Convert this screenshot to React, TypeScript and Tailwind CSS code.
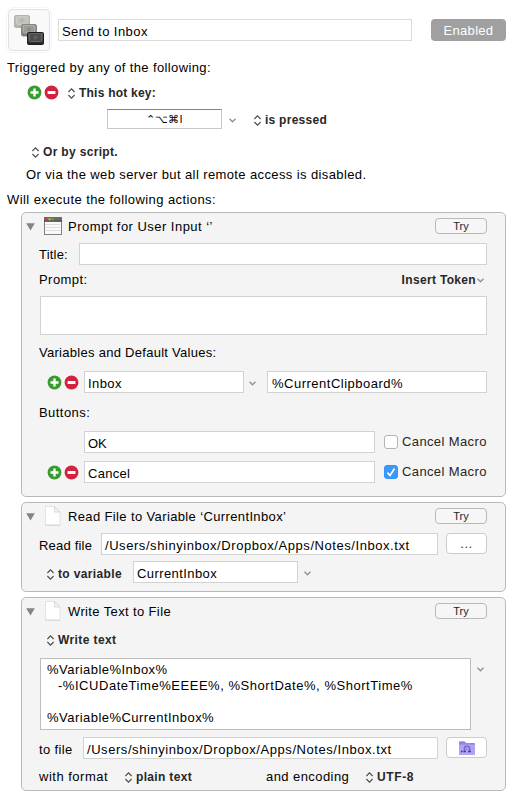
import type { ReactNode } from "react";
import { clsx } from "clsx";

const Plus = () => (
  <svg className="h-[15px] w-[15px] shrink-0" viewBox="0 0 15 15">
    <circle cx="7.5" cy="7.5" r="6.9" fill="#389b30" />
    <path d="M7.5 3.5v8M3.5 7.5h8" stroke="#fff" strokeWidth="2.4" />
  </svg>
);

const Minus = () => (
  <svg className="h-[15px] w-[15px] shrink-0" viewBox="0 0 15 15">
    <circle cx="7.5" cy="7.5" r="6.9" fill="#d1233f" />
    <rect x="3.6" y="6" width="7.8" height="3" fill="#fff" />
  </svg>
);

const PlusMinus = () => (
  <div className="flex shrink-0 gap-[2px]">
    <Plus />
    <Minus />
  </div>
);

const UpDown = ({ className }: { className?: string }) => (
  <svg className={clsx("h-[11px] w-[7px] shrink-0", className)} viewBox="0 0 7 11" fill="none" stroke="#4a4a4a" strokeWidth="1.1">
    <path d="M0.4 4 3.5 0.8 6.6 4M0.4 7 3.5 10.2 6.6 7" />
  </svg>
);

const Chevron = ({ className }: { className?: string }) => (
  <svg className={clsx("h-[5px] w-[7px] shrink-0", className)} viewBox="0 0 7 5" fill="none" stroke="#929292" strokeWidth="1.4">
    <path d="M0.5 0.7 3.5 3.7 6.5 0.7" />
  </svg>
);

const Bold = ({ children, className }: { children: ReactNode; className?: string }) => (
  <div className={clsx("text-[12px] leading-4 font-bold whitespace-nowrap text-[#272727]", className)}>{children}</div>
);

const Label = ({ children, className }: { children: ReactNode; className?: string }) => (
  <div className={clsx("leading-4 whitespace-nowrap", className)}>{children}</div>
);

const Field = ({ children, className }: { children?: ReactNode; className?: string }) => (
  <div className={clsx("h-[22px] shrink-0 border border-[#d2d2d2] bg-white pt-[4px] pl-[3px] leading-4 whitespace-nowrap", className)}>{children}</div>
);

const Checkbox = ({ checked }: { checked?: boolean }) => (
  <div className="mt-[3px] ml-[9px] flex h-4">
    <div className={clsx("mt-px h-[14px] w-[14px] rounded-[3px] border", checked ? "border-[#3594fa] bg-[#3b99fc]" : "border-[#b4b4b4] bg-white")}>
      {checked && (
        <svg viewBox="0 0 12 12" className="h-3 w-3" fill="none" stroke="#fff" strokeWidth="1.7">
          <path d="M2.4 6.6 5 9.4 9.5 2.5" />
        </svg>
      )}
    </div>
    <span className="ml-1 leading-4 tracking-[0.38px] text-[#262626]">Cancel Macro</span>
  </div>
);

const WindowIcon = () => (
  <svg className="ml-[9px] h-[18px] w-[18px]" viewBox="0 0 18 18">
    <rect x="0.5" y="0.5" width="17" height="17" fill="#fafafa" stroke="#808080" />
    <rect x="0" y="0" width="18" height="4.6" fill="#6b6b6b" />
    <rect x="0" y="3.6" width="18" height="1" fill="#3f3f3f" />
    <circle cx="2.6" cy="2.3" r="1.2" fill="#e4373c" />
    <circle cx="5.6" cy="2.3" r="1.2" fill="#dba526" />
    <circle cx="8.6" cy="2.3" r="1.2" fill="#55ad35" />
    <path d="M1.5 7.5h15M1.5 10.5h15M1.5 13.5h15" stroke="#dedede" />
  </svg>
);

const PageIcon = () => (
  <svg className="-mt-px ml-[10px] h-[20px] w-[16px]" viewBox="0 0 16 20">
    <path d="M0.5 0.5H9.5L15 6V19.2H0.5Z" fill="#fff" stroke="#e2e2e2" />
    <path d="M0.5 19.2H15" stroke="#d2d2d2" />
    <path d="M9.5 0.5V6H15Z" fill="#f4f4f4" stroke="#d0d0d0" strokeWidth="0.8" />
  </svg>
);

const Panel = ({ title, icon, height, tracking, children }: { title: string; icon: ReactNode; height: string; tracking: string; children: ReactNode }) => (
  <section className={clsx("ml-[21px] w-[485px] rounded-[5px] border border-[#b9b9b9] bg-[#f4f4f4]", height)}>
    <header className="flex h-[30px] items-start pt-1 pl-1">
      <svg className="mt-[6px] h-2 w-[9px]" viewBox="0 0 9 8">
        <path d="M0.2 0.3H8.8L4.5 7.6Z" fill="#848484" />
      </svg>
      <div className="w-[33px]">{icon}</div>
      <h2 className={clsx("mt-[2px] leading-4 whitespace-nowrap", tracking)}>{title}</h2>
      <button className="mt-[1px] mr-[18px] ml-auto h-4 w-[52px] rounded-[4px] border border-[#b9b9b9] bg-[#f6f6f6] text-[11px] leading-[14px] text-[#262626]">
        Try
      </button>
    </header>
    {children}
  </section>
);

const path = "/Users/shinyinbox/Dropbox/Apps/Notes/Inbox.txt";

export default function App() {
  return (
    <main className="h-[798px] w-[513px] overflow-hidden bg-white font-['Liberation_Sans',Arial,sans-serif] text-[13px] text-black">
      <div className="flex h-[60px] items-start">
        <div className="mt-[7px] ml-[6px] h-[46px] w-[46px] rounded-[7px] border border-[#f3f6f5] p-px">
          <svg className="h-[42px] w-[42px]" viewBox="0 0 42 42">
            <defs>
              <linearGradient id="light" x2="0" y2="1">
                <stop stopColor="#c2c2bd" />
                <stop offset="1" stopColor="#b1b1ac" />
              </linearGradient>
              <linearGradient id="mid" x2="0" y2="1">
                <stop stopColor="#a5a5a0" />
                <stop offset="1" stopColor="#777772" />
              </linearGradient>
              <linearGradient id="dark" x2="0" y2="1">
                <stop stopColor="#555" />
                <stop offset="0.75" stopColor="#3c3c3c" />
                <stop offset="1" stopColor="#181818" />
              </linearGradient>
            </defs>
            <rect x="0.5" y="0.5" width="41" height="41" rx="4" fill="#f9f9f9" stroke="#dfe1e0" />
            <rect x="6.5" y="6.5" width="15" height="12" rx="1.5" fill="url(#light)" stroke="#b3b3ae" />
            <rect x="8.5" y="7.5" width="11" height="8" rx="1" fill="#c3c3be" stroke="#cecec9" />
            <circle cx="14" cy="11.5" r="1.3" fill="none" stroke="#b0b0aa" />
            <rect x="13.5" y="15.5" width="15" height="11.5" rx="1.5" fill="url(#mid)" stroke="#85857f" />
            <rect x="15.5" y="16.5" width="11" height="7.5" rx="1" fill="#9c9c96" stroke="#afafa9" />
            <circle cx="21" cy="20.5" r="1.3" fill="none" stroke="#82827c" />
            <rect x="19.5" y="23.5" width="16" height="12" rx="1" fill="url(#dark)" stroke="#1d1d1d" />
            <rect x="21.5" y="24.5" width="12" height="8" rx="1" fill="#4c4c4c" stroke="#666" />
            <circle cx="27.5" cy="28.5" r="1.3" fill="none" stroke="#777" />
          </svg>
        </div>
        <Field className="mt-[19px] ml-[6px] w-[354px] border-[#d9dcdb] tracking-[0.43px]">Send to Inbox</Field>
        <button className="mt-[19px] ml-[19px] h-[22px] w-[75px] rounded-[4px] bg-[#a0a0a0] text-[13px] leading-[23px] tracking-[0.3px] text-white">Enabled</button>
      </div>

      <Label className="h-[25px] pl-[7px] tracking-[0.38px]">Triggered by any of the following:</Label>
      <div className="flex h-[24px] items-start pl-[27px]">
        <PlusMinus />
        <UpDown className="mt-[3px] ml-[9px]" />
        <Bold className="ml-1 tracking-[0.23px]">This hot key:</Bold>
      </div>
      <div className="flex h-[35px] items-start pl-[107px]">
        <div className="h-5 w-[115px] border border-[#c8c8c8] border-t-[#858585] bg-white text-center text-[11px] leading-[18px]">⌃⌥⌘I</div>
        <Chevron className="mt-[9px] ml-[7px]" />
        <UpDown className="mt-[6px] ml-[18px]" />
        <Bold className="mt-[3px] ml-1 tracking-[0.26px]">is pressed</Bold>
      </div>
      <div className="flex h-[23px] items-start pl-[32px]">
        <UpDown className="mt-[3px]" />
        <Bold className="ml-1 tracking-[0.33px]">Or by script.</Bold>
      </div>
      <Label className="h-[25px] pl-[26px] tracking-[0.39px]">Or via the web server but all remote access is disabled.</Label>
      <Label className="h-[20px] pl-[7px] tracking-[0.42px]">Will execute the following actions:</Label>

      <Panel title="Prompt for User Input ‘’" icon={<WindowIcon />} height="h-[285px]" tracking="tracking-[0.47px]">
        <div className="flex h-[29px] items-start pl-[17px]">
          <Label className="mt-[4px] w-[40px] tracking-[0.2px]">Title:</Label>
          <Field className="w-[408px]" />
        </div>
        <div className="flex h-[24px] items-start pl-[17px]">
          <Label className="tracking-[0.45px]">Prompt:</Label>
          <Bold className="ml-auto tracking-[0.33px]">Insert Token</Bold>
          <Chevron className="mt-[6px] mr-[21px] ml-[1px]" />
        </div>
        <div className="ml-[18px] h-[39px] w-[447px] border border-[#d2d2d2] bg-white" />
        <Label className="mt-[10px] h-[26px] pl-[17px] tracking-[0.28px]">Variables and Default Values:</Label>
        <div className="flex h-[34px] items-start pl-[25px]">
          <div className="mt-1 w-[37px]"><PlusMinus /></div>
          <Field className="w-[160px] tracking-[0.4px]">Inbox</Field>
          <Chevron className="mt-[10px] mr-[11px] ml-[5px]" />
          <Field className="w-[220px] pl-[4px] tracking-[0.5px]">%CurrentClipboard%</Field>
        </div>
        <Label className="h-[26px] pl-[17px] tracking-[0.45px]">Buttons:</Label>
        <div className="flex h-[30px] items-start pl-[62px]">
          <Field className="w-[291px]">OK</Field>
          <Checkbox />
        </div>
        <div className="flex items-start pl-[25px]">
          <div className="mt-1 w-[37px]"><PlusMinus /></div>
          <Field className="w-[291px] tracking-[0.3px]">Cancel</Field>
          <Checkbox checked />
        </div>
      </Panel>

      <div className="h-[5px]" />
      <Panel title="Read File to Variable ‘CurrentInbox’" icon={<PageIcon />} height="h-[90px]" tracking="tracking-[0.37px]">
        <div className="flex h-[28px] items-start pl-[17px]">
          <Label className="mt-[5px] w-[62px] tracking-[0.2px]">Read file</Label>
          <Field className="w-[337px] tracking-[0.56px]">{path}</Field>
          <button className="ml-2 h-[21px] w-[41px] rounded-[4px] border border-[#cccccc] bg-white text-[13px] leading-[17px] tracking-[0.6px] text-[#333]">...</button>
        </div>
        <div className="flex items-start pl-[25px]">
          <UpDown className="mt-[8px]" />
          <Bold className="mt-[5px] ml-1 w-[75px] tracking-[0.36px]">to variable</Bold>
          <Field className="w-[165px] tracking-[0.42px]">CurrentInbox</Field>
          <Chevron className="mt-[10px] ml-[6px]" />
        </div>
      </Panel>

      <div className="h-[5px]" />
      <Panel title="Write Text to File" icon={<PageIcon />} height="h-[194px]" tracking="tracking-[0.37px]">
        <div className="flex h-[30px] items-start pt-1 pl-[25px]">
          <UpDown className="mt-[3px]" />
          <Bold className="ml-1 tracking-[0.4px]">Write text</Bold>
        </div>
        <div className="flex h-[79px] items-start pl-[18px]">
          <div className="h-[72px] w-[431px] border border-[#bdbdbd] bg-white pt-[3px] pl-[6px] leading-4 tracking-[0.46px] whitespace-pre">
            <div>%Variable%Inbox%</div>
            <div className="pl-[11px] tracking-[0.54px]">-%ICUDateTime%EEEE%, %ShortDate%, %ShortTime%</div>
            <div className="mt-4">%Variable%CurrentInbox%</div>
          </div>
          <Chevron className="mt-[9px] ml-[6px]" />
        </div>
        <div className="flex h-[32px] items-start pl-[17px]">
          <Label className="mt-[5px] w-[44px] tracking-[0.35px]">to file</Label>
          <Field className="w-[355px] tracking-[0.56px]">{path}</Field>
          <button className="ml-2 flex h-[21px] w-[41px] items-center justify-center rounded-[4px] border border-[#cccccc] bg-white">
            <svg className="h-[14px] w-[16px]" viewBox="0 0 16 14">
              <path d="M0 1.2Q0 0.3 1 0.3H5.5L7 2H15Q16 2 16 3V14H0Z" fill="#9485df" />
              <rect y="3.6" width="16" height="10.4" fill="#b0a2f6" />
              <path d="M5.4 10.5V7.2Q5.4 5.2 8 5.2T10.6 7.2V10.5" fill="none" stroke="#7669c4" strokeWidth="1.5" />
              <path d="M2 10.5h1.6M4.6 10.5h2.2M9.2 10.5h2.6" fill="none" stroke="#40367f" strokeWidth="1.5" />
              <path d="M6.6 8h2.8" stroke="#8a7dd8" />
            </svg>
          </button>
        </div>
        <div className="flex h-4 items-start pl-[17px] leading-4">
          <Label className="w-[86px] tracking-[0.5px]">with format</Label>
          <UpDown className="mt-[3px]" />
          <Bold className="ml-1 w-[130px] tracking-[0.33px]">plain text</Bold>
          <Label className="w-[100px] tracking-[0.43px]">and encoding</Label>
          <UpDown className="mt-[3px]" />
          <Bold className="ml-1 tracking-[0.6px]">UTF-8</Bold>
        </div>
      </Panel>
    </main>
  );
}
